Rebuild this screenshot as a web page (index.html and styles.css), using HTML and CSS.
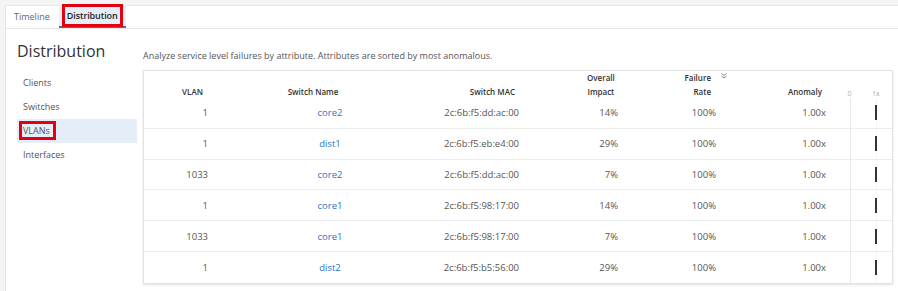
FILE: index.html
```html
<!doctype html>
<html lang="en">
  <head>
    <meta charset="UTF-8" />
    <title>Distribution</title>
    <link rel="stylesheet" href="styles.css">
  </head>
  <body>
    <div class="app">
      <div class="tabs">
        <a class="tab" href="#">Timeline</a>
        <a class="tab tab-active" href="#"><span class="mark">Distribution</span></a>
      </div>

      <div class="content">
        <!-- Left: attribute picker -->
        <div class="sidebar">
          <h1>Distribution</h1>
          <ul class="side-nav">
            <li>Clients</li>
            <li>Switches</li>
            <li class="active"><span class="mark">VLANs</span></li>
            <li>Interfaces</li>
          </ul>
        </div>

        <!-- Right: table -->
        <div class="main">
          <p class="intro">Analyze service level failures by attribute. Attributes are sorted by most anomalous.</p>

          <div class="table">
            <div class="row head">
              <div class="cell c-vlan">VLAN</div>
              <div class="cell c-name">Switch Name</div>
              <div class="cell c-mac">Switch MAC</div>
              <div class="cell c-impact">Overall<br>Impact</div>
              <div class="cell c-rate">
                <span class="rate-label">Failure<br>Rate</span>
                <svg class="sort" width="6" height="6" viewBox="0 0 6 6">
                  <polyline points="0.5,0.5 3,2.5 5.5,0.5" />
                  <polyline points="0.5,3 3,5 5.5,3" />
                </svg>
              </div>
              <div class="cell c-anomaly">Anomaly</div>
              <div class="cell c-chart scale"><span>0</span><span>1x</span></div>
            </div>

            <div class="row">
              <div class="cell c-vlan">1</div>
              <div class="cell c-name"><a href="#">core2</a></div>
              <div class="cell c-mac">2c:6b:f5:dd:ac:00</div>
              <div class="cell c-impact">14%</div>
              <div class="cell c-rate">100%</div>
              <div class="cell c-anomaly">1.00x</div>
              <div class="cell c-chart"><div class="bar"></div></div>
            </div>

            <div class="row">
              <div class="cell c-vlan">1</div>
              <div class="cell c-name"><a href="#">dist1</a></div>
              <div class="cell c-mac">2c:6b:f5:eb:e4:00</div>
              <div class="cell c-impact">29%</div>
              <div class="cell c-rate">100%</div>
              <div class="cell c-anomaly">1.00x</div>
              <div class="cell c-chart"><div class="bar"></div></div>
            </div>

            <div class="row">
              <div class="cell c-vlan">1033</div>
              <div class="cell c-name"><a href="#">core2</a></div>
              <div class="cell c-mac">2c:6b:f5:dd:ac:00</div>
              <div class="cell c-impact">7%</div>
              <div class="cell c-rate">100%</div>
              <div class="cell c-anomaly">1.00x</div>
              <div class="cell c-chart"><div class="bar"></div></div>
            </div>

            <div class="row">
              <div class="cell c-vlan">1</div>
              <div class="cell c-name"><a href="#">core1</a></div>
              <div class="cell c-mac">2c:6b:f5:98:17:00</div>
              <div class="cell c-impact">14%</div>
              <div class="cell c-rate">100%</div>
              <div class="cell c-anomaly">1.00x</div>
              <div class="cell c-chart"><div class="bar"></div></div>
            </div>

            <div class="row">
              <div class="cell c-vlan">1033</div>
              <div class="cell c-name"><a href="#">core1</a></div>
              <div class="cell c-mac">2c:6b:f5:98:17:00</div>
              <div class="cell c-impact">7%</div>
              <div class="cell c-rate">100%</div>
              <div class="cell c-anomaly">1.00x</div>
              <div class="cell c-chart"><div class="bar"></div></div>
            </div>

            <div class="row">
              <div class="cell c-vlan">1</div>
              <div class="cell c-name"><a href="#">dist2</a></div>
              <div class="cell c-mac">2c:6b:f5:b5:56:00</div>
              <div class="cell c-impact">29%</div>
              <div class="cell c-rate">100%</div>
              <div class="cell c-anomaly">1.00x</div>
              <div class="cell c-chart"><div class="bar"></div></div>
            </div>
          </div>
        </div>
      </div>
    </div>
  </body>
</html>
```

FILE: styles.css
```css
body {
  margin: 0;
  background-color: #f4f4f4;
  font-family: "Open Sans", "Noto Sans", sans-serif;
  color: #555;
}
a {
  text-decoration: none;
}
.app {
  margin: 5px 0 0 5px;
  min-height: calc(100vh - 5px);
  background-color: #fff;
  border-left: 1px solid #e4e4e4;
  border-top: 1px solid #e8e8e8;
  box-sizing: border-box;
}

/* tabs */
.tabs {
  display: flex;
  gap: 1px;
  height: 22px;
  border-bottom: 1px solid #e6e6e6;
}
.tab {
  padding: 0 8px;
  font-size: 9px;
  line-height: 22px;
  color: #666;
  box-sizing: border-box;
}
.tab-active {
  padding: 0 3px;
  background-color: #e6eff9;
  border-bottom: 2px solid #2a7bc4;
  line-height: 20px;
  color: #222;
  font-weight: 600;
  letter-spacing: -0.1px;
}
.mark {
  border: 3px solid #e3000f;
  padding: 2px 2px;
}

/* layout */
.content {
  display: flex;
  gap: 6px;
}
.sidebar {
  width: 120px;
  padding: 11px 0 0 11px;
  flex: none;
}
.sidebar h1 {
  margin: 0 0 9px;
  font-size: 16px;
  line-height: 22px;
  font-weight: 400;
  color: #333;
}
.side-nav {
  list-style: none;
  margin: 0;
  padding: 0;
}
.side-nav li {
  height: 24px;
  line-height: 24px;
  padding-left: 6px;
  font-size: 9px;
  color: #555;
}
.side-nav li.active {
  padding-left: 2px;
  background-color: #e4edf8;
}
.side-nav li.active .mark {
  padding: 0 3px 0 1px;
}
.main {
  flex: 1;
  padding: 20px 5px 8px 0;
}
.intro {
  margin: 0 0 8px;
  font-size: 9px;
  line-height: 13px;
  color: #555;
}

/* table */
.table {
  border: 1px solid #e2e2e2;
  box-shadow: 0 1px 2px rgba(0, 0, 0, 0.12);
}
.row {
  display: grid;
  grid-template-columns: 68px 220px 90px 100px 110px 100px 1fr;
  height: 30.8px;
  box-sizing: border-box;
  border-bottom: 1px solid #ececec;
  font-size: 9.5px;
  align-items: center;
}
.row:last-child {
  border-bottom: none;
}
.row.head {
  height: 27px;
  border-bottom: none;
  align-items: end;
  font-size: 8px;
  font-weight: 600;
  line-height: 14px;
  color: #333;
}
.cell {
  height: 100%;
  display: flex;
  align-items: center;
  white-space: nowrap;
}
.head .cell {
  align-items: flex-end;
}
.c-vlan { justify-content: flex-end; padding-right: 4px; }
.head .c-vlan { padding-right: 9px; }
.c-name { justify-content: center; padding-left: 16px; }
.head .c-name { padding: 0 18px 0 0; }
.c-mac { justify-content: flex-end; padding-right: 3px; }
.head .c-mac { padding-right: 7px; }
.c-impact { justify-content: flex-end; padding-right: 4px; }
.head .c-impact { justify-content: flex-start; padding: 0 0 0 65px; text-align: center; }
.c-rate { justify-content: flex-end; padding-right: 16px; }
.head .c-rate { padding-right: 5px; text-align: right; }
.c-anomaly { justify-content: flex-end; padding-right: 6px; }
.head .c-anomaly { padding-right: 10px; }
.cell a {
  color: #1f74c7;
}
.sort {
  align-self: flex-start;
  margin: 2px 0 0 10px;
  fill: none;
  stroke: #888;
  stroke-width: 1;
}

/* anomaly chart column */
.c-chart {
  background:
    linear-gradient(#e9e9e9, #e9e9e9) 18px 0 / 1px 100% no-repeat,
    linear-gradient(#f4f4f4, #f4f4f4) 44px 0 / 1px 100% no-repeat;
}
.head .c-chart {
  background: none;
}
.bar {
  width: 2px;
  height: 15px;
  margin-left: 43px;
  background-color: #333;
}
.scale {
  padding-left: 14px;
  font-size: 7px;
  font-weight: 400;
  line-height: 10px;
  color: #aaa;
}
.scale span {
  width: 7px;
  text-align: center;
}
.scale span + span {
  margin-left: 19px;
}
```
